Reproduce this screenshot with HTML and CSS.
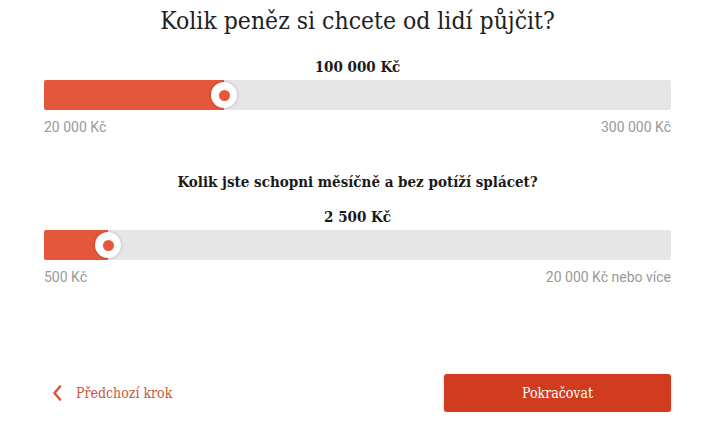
FILE: index.html
```html
<!DOCTYPE html>
<html lang="cs">
<head>
<meta charset="utf-8">
<title>Kolik peněz si chcete od lidí půjčit?</title>
<link rel="stylesheet" href="styles.css">
</head>
<body>
<main class="page">
  <h1 class="title">Kolik peněz si chcete od lidí půjčit?</h1>

  <section class="slider-block">
    <div class="value">100 000 Kč</div>
    <div class="track">
      <div class="fill" style="width: 180px"></div>
      <div class="handle" style="left: 180px"></div>
    </div>
    <div class="limits"><span>20 000 Kč</span><span>300 000 Kč</span></div>
  </section>

  <h2 class="question">Kolik jste schopni měsíčně a bez potíží splácet?</h2>

  <section class="slider-block">
    <div class="value">2 500 Kč</div>
    <div class="track">
      <div class="fill" style="width: 64px"></div>
      <div class="handle" style="left: 64px"></div>
    </div>
    <div class="limits"><span>500 Kč</span><span>20 000 Kč nebo více</span></div>
  </section>

  <nav class="actions">
    <a class="back" href="#">
      <svg class="chev" width="10" height="16" viewBox="0 0 10 16"><path d="M8 1.5 L2.5 8 L8 14.5" fill="none" stroke="currentColor" stroke-width="2.6" stroke-linecap="round" stroke-linejoin="round"/></svg>
      <span>Předchozí krok</span>
    </a>
    <button class="next" type="button">Pokračovat</button>
  </nav>
</main>
</body>
</html>
```

FILE: styles.css
```css
html, body {
  margin: 0;
  padding: 0;
  background: #ffffff;
}

body {
  font-family: "DejaVu Serif Condensed", "DejaVu Serif", serif;
  color: #1a1a1a;
}

.page {
  width: 627px;
  margin-left: 44px;
  display: flex;
  flex-direction: column;
}

.title {
  margin: 5px 0 0;
  font-size: 24.5px;
  line-height: 32px;
  font-weight: normal;
  text-align: center;
  color: #1e1e1e;
}

.slider-block {
  display: flex;
  flex-direction: column;
}

.value {
  text-align: center;
  font-weight: bold;
  font-size: 15px;
  line-height: 20px;
  margin-top: 20px;
  margin-bottom: 3px;
}

.question + .slider-block .value {
  margin-top: 15px;
}

.track {
  position: relative;
  height: 30px;
  background: #e6e6e6;
  border-radius: 2px;
}

.fill {
  position: absolute;
  left: 0;
  top: 0;
  bottom: 0;
  background: #e5573b;
  border-radius: 2px 0 0 2px;
}

.handle {
  position: absolute;
  top: 50%;
  width: 26px;
  height: 26px;
  margin-left: -13px;
  margin-top: -13px;
  border-radius: 50%;
  background: #ffffff;
  box-shadow: 0 0 3px rgba(0, 0, 0, 0.25);
}

.handle::after {
  content: "";
  position: absolute;
  left: 50%;
  top: 50%;
  width: 11px;
  height: 11px;
  margin: -5.5px 0 0 -5.5px;
  border-radius: 50%;
  background: #e5573b;
}

.limits {
  display: flex;
  justify-content: space-between;
  margin-top: 9px;
  font-family: Roboto, "Liberation Sans", sans-serif;
  font-size: 14px;
  line-height: 17px;
  color: #999999;
}

.question {
  margin: 36px 0 0;
  text-align: center;
  font-size: 15px;
  line-height: 20px;
  font-weight: bold;
}

.actions {
  display: flex;
  justify-content: space-between;
  align-items: center;
  margin-top: 88px;
}

.back {
  display: flex;
  align-items: center;
  gap: 14px;
  padding-left: 8px;
  color: #c9553c;
  text-decoration: none;
  font-size: 14px;
}

.chev {
  color: #d9583d;
}

.next {
  width: 227px;
  height: 38px;
  border: 0;
  border-radius: 3px;
  background: #d13b1e;
  color: #ffffff;
  font-family: "DejaVu Serif Condensed", "DejaVu Serif", serif;
  font-size: 14px;
  box-shadow: 0 1px 3px rgba(0, 0, 0, 0.2);
  cursor: pointer;
}
```
